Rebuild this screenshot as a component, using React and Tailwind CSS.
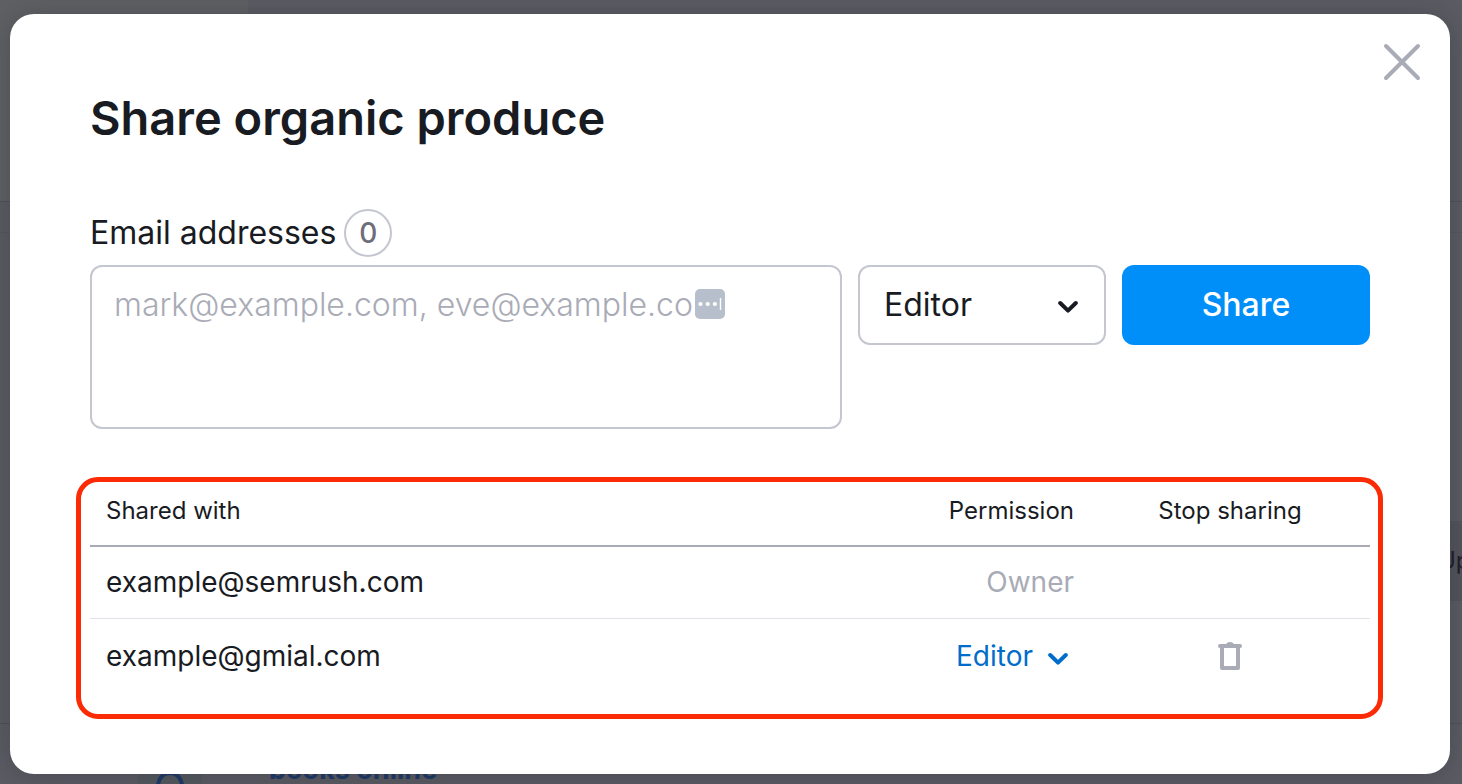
import React from "react";

function Chevron({ className }) {
  return (
    <svg viewBox="0 0 20 14" fill="none" aria-hidden="true" className={className}>
      <path d="M2.2 3 10 10.6 17.8 3" stroke="currentColor" strokeWidth="4" strokeLinecap="round" strokeLinejoin="round" />
    </svg>
  );
}

function PageBehind() {
  return (
    <div aria-hidden="true" className="absolute inset-0 flex flex-col overflow-hidden bg-[#5b5b63]">
      <div className="flex h-[202px] border-b border-[#505058]">
        <div className="w-[248px] bg-[#5f6064]" />
      </div>
      <div className="h-[31px] border-b border-[#56565e]" />
      <div className="mt-[288px] flex h-20 justify-end">
        <div className="flex w-10 items-center bg-[#53535c] pl-4 text-2xl text-[#1f2029]">Up</div>
      </div>
      <div className="mt-auto flex h-[61px] flex-col justify-end border-t border-[#505058]">
        <div className="flex h-9 items-start pl-[138px]">
          <div className="flex w-16 justify-center bg-[#54585f]">
            <svg viewBox="0 0 32 36" fill="none" className="h-9 w-8">
              <circle cx="16" cy="20" r="7" fill="#1f3a66" />
              <path d="M4 38C4 31 9 25 16 25s12 6 12 13" stroke="#1f3a66" strokeWidth="4" />
            </svg>
          </div>
          <span className="ml-[67px] text-[27px] leading-[44px] font-bold text-[#1f3a66]">books online</span>
        </div>
      </div>
    </div>
  );
}

function ShareForm() {
  return (
    <form className="flex flex-col gap-2" onSubmit={(e) => e.preventDefault()}>
      <div className="flex items-center gap-2">
        <label htmlFor="emails" className="text-[32px] leading-[48px]">Email addresses</label>
        <span className="flex size-12 items-center justify-center rounded-full border-2 border-[#c4c7cf] text-[28px] font-medium text-[#6c6e79]">0</span>
      </div>
      <div className="flex items-start gap-4">
        <div className="relative flex flex-1">
          <textarea
            id="emails"
            placeholder="mark@example.com, eve@example.com"
            className="h-[164px] w-full resize-none rounded-xl border-2 border-[#c4c7cf] bg-white px-[22px] py-[14px] text-[32px] leading-[48px] font-[360] outline-none placeholder:text-[#a9abb6]"
          />
          <svg viewBox="0 0 30 30" aria-hidden="true" className="absolute top-[24px] left-[605px] size-[30px]">
            <rect width="30" height="30" rx="5" fill="#b8bfcc" />
            <circle cx="5.5" cy="15" r="2.1" fill="white" />
            <circle cx="12.7" cy="15" r="2.1" fill="white" />
            <circle cx="19.9" cy="15" r="2.1" fill="white" />
            <path d="M25.5 9v12" stroke="white" strokeWidth="1.4" />
          </svg>
        </div>
        <div className="relative w-[248px]">
          <select aria-label="Permission" className="h-20 w-full appearance-none rounded-xl border-2 border-[#c4c7cf] bg-white px-6 text-[32px] outline-none">
            <option>Editor</option>
            <option>Viewer</option>
          </select>
          <Chevron className="pointer-events-none absolute top-[35px] right-[28px] h-[14px] w-5" />
        </div>
        <button type="submit" className="h-20 w-[248px] rounded-xl bg-[#008ff8] text-[32px] font-medium text-white">Share</button>
      </div>
    </form>
  );
}

function SharedTable() {
  return (
    <div className="mt-12 -mr-[13px] -ml-[14px] rounded-[22px] border-5 border-[#fb2b05] pr-2 pb-5 pl-[9px]">
      <table className="w-full table-fixed border-collapse text-[28px]">
        <thead>
          <tr className="h-16 border-b-2 border-[#a9abb6] align-top text-2xl leading-[58px]">
            <th scope="col" className="px-4 text-left font-[385]">Shared with</th>
            <th scope="col" className="w-[280px] px-4 text-right font-[385]">Permission</th>
            <th scope="col" className="w-[280px] px-4 text-center font-[385]">Stop sharing</th>
          </tr>
        </thead>
        <tbody>
          <tr className="h-[72px] border-b border-[#e0e1e9]">
            <td className="px-4">example@semrush.com</td>
            <td className="px-4 text-right text-[#a9abb6]">Owner</td>
            <td />
          </tr>
          <tr className="h-[76px]">
            <td className="px-4">example@gmial.com</td>
            <td className="px-4">
              <div className="relative ml-auto w-[118px] text-[#006dca]">
                <select aria-label="Permission for example@gmial.com" className="w-full appearance-none bg-transparent outline-none">
                  <option>Editor</option>
                  <option>Viewer</option>
                </select>
                <Chevron className="pointer-events-none absolute top-[17px] right-[6px] h-[14px] w-5" />
              </div>
            </td>
            <td className="px-4">
              <button type="button" aria-label="Stop sharing" className="mx-auto block text-[#a9abb6]">
                <svg viewBox="0 0 24 28" fill="none" className="h-7 w-6">
                  <path d="M2 2h6.2C9 .7 10 0 12 0s3 .7 3.800 2H22a2 2 0 0 1 0 4H2a2 2 0 0 1 0-4Z" fill="currentColor" />
                  <path d="M4 4v22h16V4" stroke="currentColor" strokeWidth="4" strokeLinejoin="round" />
                </svg>
              </button>
            </td>
          </tr>
        </tbody>
      </table>
    </div>
  );
}

export default function App() {
  return (
    <div className="relative flex min-h-screen flex-col pt-[14px] pr-3 pb-[10px] pl-[10px] font-['Inter',sans-serif] font-[385] text-[#191b23]">
      <PageBehind />
      <main role="dialog" aria-labelledby="title" className="relative flex-1 rounded-3xl bg-white px-20 pt-[74px] pb-[55px] shadow-[0_2px_24px_rgba(25,27,35,0.25)]">
        <button type="button" aria-label="Close" className="absolute top-[29px] right-[29px] text-[#a9abb6]">
          <svg viewBox="0 0 38 38" fill="none" className="size-[38px]">
            <path d="M3 3 35 35M35 3 3 35" stroke="currentColor" strokeWidth="4" strokeLinecap="round" />
          </svg>
        </button>
        <h1 id="title" className="mb-[61px] text-[47px] leading-[60px] font-semibold">Share organic produce</h1>
        <ShareForm />
        <SharedTable />
      </main>
    </div>
  );
}
